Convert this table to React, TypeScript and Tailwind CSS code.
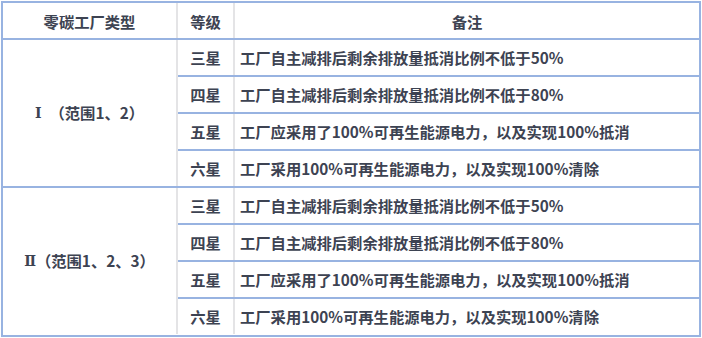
import React from "react"

const levels = [
  { star: "三星", note: "工厂自主减排后剩余排放量抵消比例不低于50%" },
  { star: "四星", note: "工厂自主减排后剩余排放量抵消比例不低于80%" },
  { star: "五星", note: "工厂应采用了100%可再生能源电力，以及实现100%抵消" },
  { star: "六星", note: "工厂采用100%可再生能源电力，以及实现100%清除" },
]

const groups = [
  { num: "Ⅰ", rest: "（范围1、2）", gap: "mr-[8px]" },
  { num: "Ⅱ", rest: "（范围1、2、3）", gap: "" },
]

function App() {
  return (
    <div className="w-[702px] h-[338px] bg-white pl-[1px] pt-[1px]" style={{ fontFamily: '"Noto Sans CJK SC", "Noto Sans", sans-serif' }}>
      <div className="w-[700px] h-[336px] border-2 border-[#98b3e1] flex flex-col text-[15.3px] font-bold text-[#3d4352] leading-none">
        <div className="flex h-[37px] border-b-2 border-[#98b3e1]">
          <div className="w-[175px] border-r-2 border-[#e4e4e6] flex items-center justify-center pt-[3px]">零碳工厂类型</div>
          <div className="w-[57px] border-r-2 border-[#e4e4e6] flex items-center justify-center pt-[3px]">等级</div>
          <div className="flex-1 flex items-center justify-center pt-[3px]">备注</div>
        </div>
        {groups.map((g, gi) => (
          <div key={g.num} className={`flex ${gi === 0 ? "border-b-2 border-[#98b3e1]" : ""}`}>
            <div className="w-[175px] border-r-2 border-[#e4e4e6] flex items-center justify-center">
              <span className={`font-['DejaVu_Serif',serif] text-[14px] ${g.gap}`}>{g.num}</span>
              <span>{g.rest}</span>
            </div>
            <div className="flex-1 flex flex-col">
              {levels.map((l, li) => (
                <div key={l.star} className={`flex ${li === 3 ? "h-[35px]" : "h-[37px] border-b-2 border-[#98b3e1]"}`}>
                  <div className="w-[57px] border-r-2 border-[#e4e4e6] flex items-center justify-center">{l.star}</div>
                  <div className="flex-1 flex items-center pl-[5px]">{l.note}</div>
                </div>
              ))}
            </div>
          </div>
        ))}
      </div>
    </div>
  )
}

export default App
